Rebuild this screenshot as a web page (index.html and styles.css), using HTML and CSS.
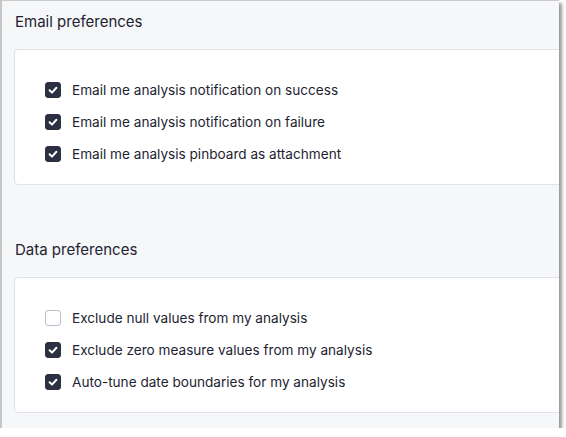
FILE: index.html
```html
<!DOCTYPE html>
<html>
<head>
<meta charset="utf-8">
<link rel="stylesheet" href="styles.css">
</head>
<body>
<div class="frame">
  <h2 class="heading heading-first">Email preferences</h2>
  <div class="card">
    <label class="row"><span class="box checked"><svg viewBox="0 0 16 16" width="16" height="16"><path d="M4.6 8.3 L7 10.6 L11.4 5.8" fill="none" stroke="#fff" stroke-width="2" stroke-linecap="round" stroke-linejoin="round"/></svg></span><span class="label">Email me analysis notification on success</span></label>
    <label class="row"><span class="box checked"><svg viewBox="0 0 16 16" width="16" height="16"><path d="M4.6 8.3 L7 10.6 L11.4 5.8" fill="none" stroke="#fff" stroke-width="2" stroke-linecap="round" stroke-linejoin="round"/></svg></span><span class="label">Email me analysis notification on failure</span></label>
    <label class="row"><span class="box checked"><svg viewBox="0 0 16 16" width="16" height="16"><path d="M4.6 8.3 L7 10.6 L11.4 5.8" fill="none" stroke="#fff" stroke-width="2" stroke-linecap="round" stroke-linejoin="round"/></svg></span><span class="label">Email me analysis pinboard as attachment</span></label>
  </div>
  <h2 class="heading heading-second">Data preferences</h2>
  <div class="card">
    <label class="row"><span class="box"></span><span class="label">Exclude null values from my analysis</span></label>
    <label class="row"><span class="box checked"><svg viewBox="0 0 16 16" width="16" height="16"><path d="M4.6 8.3 L7 10.6 L11.4 5.8" fill="none" stroke="#fff" stroke-width="2" stroke-linecap="round" stroke-linejoin="round"/></svg></span><span class="label">Exclude zero measure values from my analysis</span></label>
    <label class="row"><span class="box checked"><svg viewBox="0 0 16 16" width="16" height="16"><path d="M4.6 8.3 L7 10.6 L11.4 5.8" fill="none" stroke="#fff" stroke-width="2" stroke-linecap="round" stroke-linejoin="round"/></svg></span><span class="label">Auto-tune date boundaries for my analysis</span></label>
  </div>
</div>
</body>
</html>
```
FILE: styles.css
```css
html, body {
  margin: 0;
  padding: 0;
  background: #ffffff;
}
body {
  font-family: Inter, "Noto Sans", sans-serif;
  color: #1d2330;
}
.frame {
  box-sizing: border-box;
  width: 559px;
  height: 428px;
  border-left: 2px solid #c6c6c6;
  border-top: 1px solid #cacaca;
  background: #f6f7f9;
  box-shadow: 3px 3px 3px rgba(0, 0, 0, 0.4);
  overflow: hidden;
  padding-left: 12px;
}
.heading {
  margin: 0;
  font-size: 15px;
  font-weight: 400;
  line-height: 20px;
  padding-left: 1px;
  color: #1d2330;
}
.heading-first {
  margin-top: 11px;
  margin-bottom: 17px;
}
.heading-second {
  margin-top: 55px;
  margin-bottom: 17px;
}
.card {
  width: 620px;
  height: 136px;
  box-sizing: border-box;
  background: #ffffff;
  border: 1px solid #dfe2e8;
  border-radius: 4px;
  padding: 24px 0 0 30px;
}
.row {
  display: flex;
  align-items: center;
  height: 32px;
  gap: 11px;
}
.box {
  box-sizing: border-box;
  width: 16px;
  height: 16px;
  border-radius: 3px;
  border: 1px solid #b9bfcb;
  background: #fff;
  flex: none;
  display: block;
}
.box.checked {
  background: #2b3142;
  border-color: #2b3142;
}
.box svg {
  display: block;
  margin: -1px;
}
.label {
  font-size: 13.6px;
  line-height: 20px;
  color: #1d2330;
}
```
